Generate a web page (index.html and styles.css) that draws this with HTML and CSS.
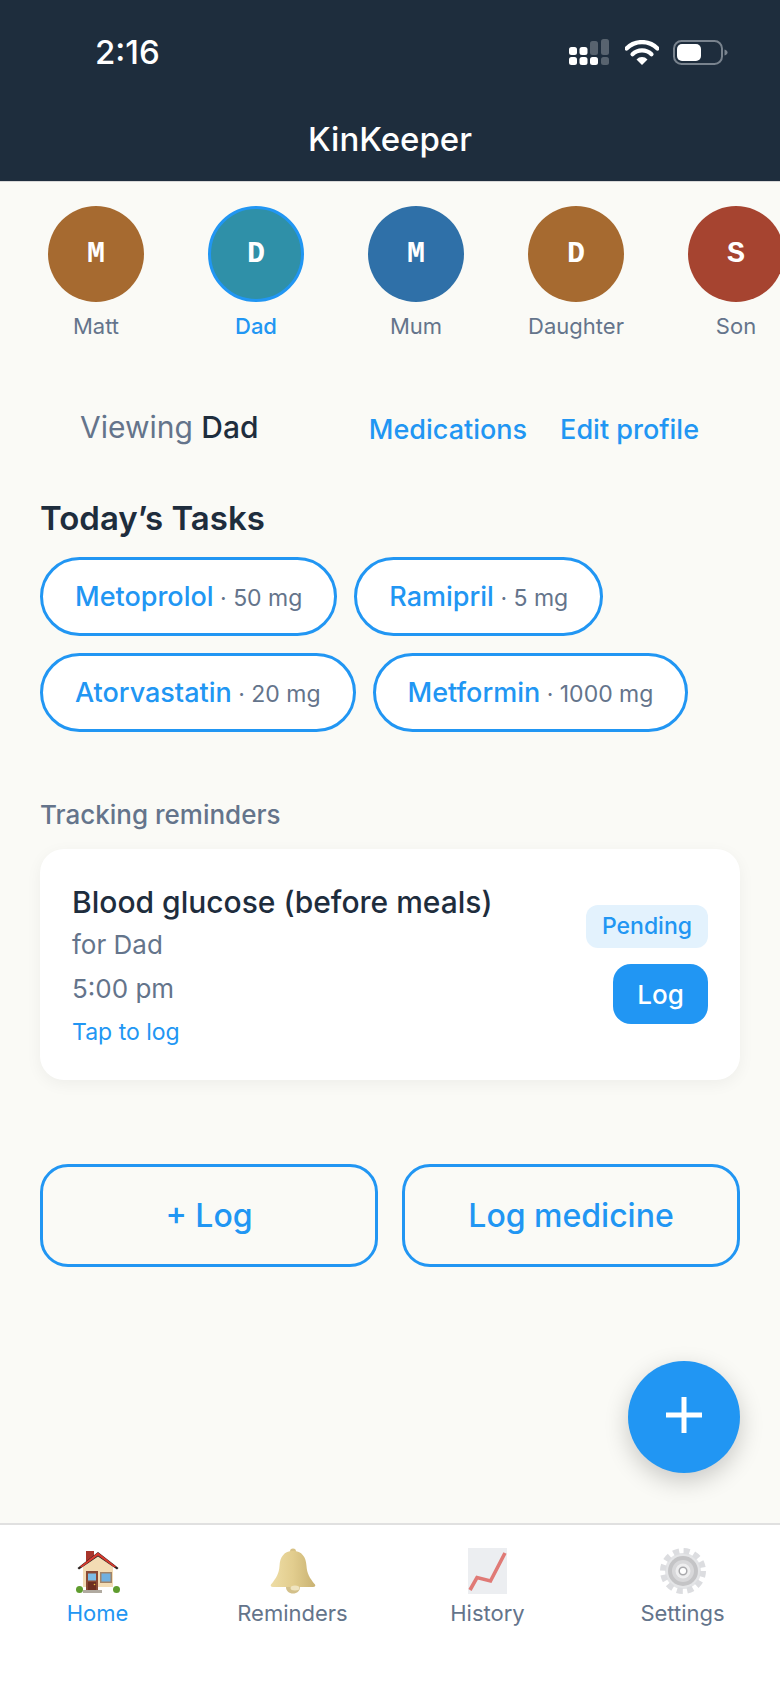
FILE: index.html
```html
<!DOCTYPE html>
<html lang="en">
<head>
    <meta charset="UTF-8">
    <meta name="viewport" content="width=device-width, initial-scale=1.0">
    <title>KinKeeper</title>
    <link rel="stylesheet" href="styles.css">
</head>
<body>

<div class="app">
    <!-- Header with status bar -->
    <header class="app-header">
        <div class="status-bar">
            <span class="status-time">2:16</span>
            <div class="status-icons">
                <svg class="icon-signal" width="42" height="26" viewBox="0 0 42 26">
                    <rect x="0" y="8" width="8" height="8" rx="2.5" fill="#fff"/>
                    <rect x="10.5" y="8" width="8" height="8" rx="2.5" fill="#fff"/>
                    <rect x="21" y="2" width="8" height="14" rx="2.5" fill="#58636f"/>
                    <rect x="32" y="0" width="8" height="16" rx="2.5" fill="#58636f"/>
                    <rect x="0" y="18" width="8" height="8" rx="2.5" fill="#fff"/>
                    <rect x="10.5" y="18" width="8" height="8" rx="2.5" fill="#fff"/>
                    <rect x="21" y="18" width="8" height="8" rx="2.5" fill="#fff"/>
                    <rect x="32" y="18" width="8" height="8" rx="2.5" fill="#58636f"/>
                </svg>
                <svg class="icon-wifi" width="34" height="25" viewBox="0 0 34 25">
                    <path d="M1.5 8.5a22 22 0 0 1 31 0" fill="none" stroke="#fff" stroke-width="4.4" stroke-linecap="round"/>
                    <path d="M7.5 14.3a13.5 13.5 0 0 1 19 0" fill="none" stroke="#fff" stroke-width="4.2" stroke-linecap="round"/>
                    <path d="M11.5 19.5a7.5 7.5 0 0 1 11 0L17 25z" fill="#fff"/>
                </svg>
                <svg class="icon-battery" width="55" height="25" viewBox="0 0 55 25">
                    <rect x="1" y="1" width="48" height="23" rx="7.5" fill="none" stroke="#79838e" stroke-width="2"/>
                    <rect x="4" y="4" width="24" height="17" rx="5" fill="#fff"/>
                    <path d="M51.500 9.500c2 .6 3 1.700 3 3s-1 2.400-3 3z" fill="#79838e"/>
                </svg>
            </div>
        </div>
        <h1 class="app-title">KinKeeper</h1>
    </header>

    <main class="app-main">
        <!-- Family members -->
        <div class="member-row">
            <div class="member">
                <div class="avatar avatar-amber">M</div>
                <span class="member-name">Matt</span>
            </div>
            <div class="member member-active">
                <div class="avatar avatar-teal">D</div>
                <span class="member-name">Dad</span>
            </div>
            <div class="member">
                <div class="avatar avatar-blue">M</div>
                <span class="member-name">Mum</span>
            </div>
            <div class="member">
                <div class="avatar avatar-amber">D</div>
                <span class="member-name">Daughter</span>
            </div>
            <div class="member">
                <div class="avatar avatar-red">S</div>
                <span class="member-name">Son</span>
            </div>
        </div>

        <div class="viewing-row">
            <div class="viewing-label">Viewing <strong>Dad</strong></div>
            <div class="viewing-links">
                <a class="text-link">Medications</a>
                <a class="text-link">Edit profile</a>
            </div>
        </div>

        <section class="content">
            <h2 class="section-title">Today’s Tasks</h2>
            <div class="chip-list">
                <button class="chip"><span class="chip-name">Metoprolol</span> · 50 mg</button>
                <button class="chip"><span class="chip-name">Ramipril</span> · 5 mg</button>
                <button class="chip"><span class="chip-name">Atorvastatin</span> · 20 mg</button>
                <button class="chip"><span class="chip-name">Metformin</span> · 1000 mg</button>
            </div>

            <h3 class="section-subtitle">Tracking reminders</h3>
            <div class="reminder-card">
                <div class="reminder-info">
                    <div class="reminder-title">Blood glucose (before meals)</div>
                    <div class="reminder-for">for Dad</div>
                    <div class="reminder-time">5:00 pm</div>
                    <div class="reminder-hint">Tap to log</div>
                </div>
                <div class="reminder-actions">
                    <span class="badge-pending">Pending</span>
                    <button class="log-button">Log</button>
                </div>
            </div>

            <div class="action-row">
                <button class="action-button">+ Log</button>
                <button class="action-button">Log medicine</button>
            </div>
        </section>

        <button class="fab" aria-label="Add">
            <svg width="36" height="36" viewBox="0 0 36 36"><path d="M15.500 0h5v15.500H36v5H20.500V36h-5V20.500H0v-5h15.500z" fill="#fff"/></svg>
        </button>
    </main>

    <!-- Bottom tabs -->
    <nav class="tab-bar">
        <div class="tab tab-active">
            <svg class="tab-icon" width="44" height="44" viewBox="0 0 44 44">
                <rect x="10" y="2" width="8" height="12" fill="#a8352b"/>
                <path d="M22 6 37 18v20H7V18z" fill="#f3dcb4"/>
                <path d="M1.500 19 22 3l20.500 16-1.500 1.500L22 7.500 3 20.500z" fill="#2b2320"/>
                <path d="M4 17.500 22 3.500l18 14-1.500 1L22 6.500 5.500 18.500z" fill="#d83a2e"/>
                <rect x="10" y="22" width="12" height="20" fill="#8a4a35"/>
                <rect x="12" y="24.500" width="8" height="7" fill="#7cbce6"/>
                <rect x="12" y="33" width="8" height="8" fill="#6e2f22"/>
                <circle cx="18.500" cy="35.500" r=".8" fill="#f0c040"/>
                <rect x="24" y="23" width="12" height="11" fill="#a28468"/>
                <rect x="25.500" y="24.500" width="9" height="8" fill="#70b0e0"/>
                <rect x="7" y="41" width="19" height="3" fill="#b0aaa0"/>
                <circle cx="3.500" cy="40.500" r="3.500" fill="#5f9c2e"/>
                <circle cx="40.500" cy="40.500" r="3.500" fill="#5f9c2e"/>
            </svg>
            <span class="tab-label">Home</span>
        </div>
        <div class="tab">
            <svg class="tab-icon" width="46" height="46" viewBox="0 0 46 46">
                <defs>
                    <linearGradient id="bellFill" x1="0" y1="0" x2="1" y2="0">
                        <stop offset="0" stop-color="#eedda6"/>
                        <stop offset=".5" stop-color="#e2cd8e"/>
                        <stop offset="1" stop-color="#c9b272"/>
                    </linearGradient>
                </defs>
                <circle cx="23" cy="3.500" r="3" fill="#d8c286"/>
                <path d="M23 3c9 0 13 6 13.500 15 .4 7 3 12 8.500 18.500.8 1.300 0 2.500-2 2.500H3c-2 0-2.800-1.200-2-2.500C6.500 30 9.100 25 9.500 18 10 9 14 3 23 3z" fill="url(#bellFill)"/>
                <path d="M16 39c0 4 3 6.500 7 6.500s7-2.500 7-6.500z" fill="#d3c08a"/>
                <ellipse cx="25" cy="40" rx="4.500" ry="2.500" fill="#efe4c0"/>
            </svg>
            <span class="tab-label">Reminders</span>
        </div>
        <div class="tab">
            <svg class="tab-icon" width="39" height="46" viewBox="0 0 39 46">
                <rect width="39" height="46" fill="#eceef1"/>
                <path d="M2 42 9 29.500 22.500 33 37 5" fill="none" stroke="#e07a76" stroke-width="3.600"/>
            </svg>
            <span class="tab-label">History</span>
        </div>
        <div class="tab">
            <svg class="tab-icon" width="46" height="46" viewBox="0 0 46 46">
                <circle cx="23" cy="23" r="18" fill="#e4e5e7"/>
                <circle cx="23" cy="23" r="20" fill="none" stroke="#dcdde0" stroke-width="6" stroke-dasharray="6 4.470"/>
                <circle cx="23" cy="23" r="15" fill="#c4c4c6"/>
                <circle cx="23" cy="23" r="11" fill="#d8d8da"/>
                <circle cx="23" cy="23" r="7.500" fill="#eeeeef"/>
                <circle cx="23" cy="23" r="3.800" fill="#fff" stroke="#a9a9ac" stroke-width="1.500"/>
            </svg>
            <span class="tab-label">Settings</span>
        </div>
    </nav>
</div>

</body>
</html>
```

FILE: styles.css
```css
* {
    box-sizing: border-box;
}

body {
    margin: 0;
    font-family: Inter, "Noto Sans", sans-serif;
    color: #1e2d3d;
    background-color: #fafaf6;
}

button {
    font-family: inherit;
    cursor: pointer;
}

.app {
    display: flex;
    flex-direction: column;
    width: 780px;
    height: 1688px;
    overflow: hidden;
}

/* Header */
.app-header {
    height: 182px;
    background-color: #1e2d3d;
    color: #fff;
    border-bottom: 1px solid #d8d8d8;
}

.status-bar {
    display: flex;
    justify-content: space-between;
    align-items: center;
    height: 104px;
    padding: 0 52px 0 95px;
}

.status-time {
    font-size: 33px;
    font-weight: 500;
}

.status-icons {
    display: flex;
    align-items: center;
    gap: 14px;
}

.app-title {
    margin: 0;
    text-align: center;
    font-size: 33px;
    line-height: 70px;
    font-weight: 500;
}

/* Main */
.app-main {
    position: relative;
    flex: 1;
}

.member-row {
    display: flex;
    padding: 24px 0 0 16px;
    overflow: hidden;
}

.member {
    display: flex;
    flex-direction: column;
    align-items: center;
    flex: 0 0 160px;
}

.avatar {
    display: flex;
    justify-content: center;
    align-items: center;
    width: 96px;
    height: 96px;
    border-radius: 50%;
    color: #fff;
    font-family: "Liberation Mono", monospace;
    font-size: 30px;
    font-weight: bold;
}

.avatar-amber { background-color: #a66a30; }
.avatar-teal { background-color: #2f90a8; }
.avatar-blue { background-color: #2f70a8; }
.avatar-red { background-color: #a64430; }

.member-name {
    margin-top: 9px;
    font-size: 22px;
    line-height: 30px;
    color: #64748b;
}

.member-active .avatar {
    border: 3px solid #2196f3;
}

.member-active .member-name {
    color: #2196f3;
    font-weight: 500;
}

.viewing-row {
    display: flex;
    justify-content: space-between;
    align-items: flex-start;
    margin-top: 66px;
    padding: 0 81px 0 80px;
}

.viewing-label {
    font-size: 30px;
    line-height: 40px;
    color: #64748b;
}

.viewing-label strong {
    font-weight: 500;
    color: #1e2d3d;
}

.viewing-links {
    display: flex;
    gap: 33px;
    margin-top: 3px;
}

.text-link {
    font-size: 27px;
    line-height: 40px;
    font-weight: 500;
    color: #2196f3;
}

.content {
    padding: 0 40px;
}

.section-title {
    margin: 46px 0 17px;
    font-size: 33px;
    line-height: 44px;
    font-weight: 600;
}

.chip-list {
    display: flex;
    flex-wrap: wrap;
    gap: 17px;
}

.chip {
    height: 79px;
    padding: 0 32px;
    border: 3px solid #2196f3;
    border-radius: 40px;
    background-color: #fff;
    color: #64748b;
    font-size: 23px;
}

.chip-name {
    font-size: 27px;
    font-weight: 500;
    color: #2196f3;
}

.section-subtitle {
    margin: 65px 0 16px;
    font-size: 26px;
    line-height: 36px;
    font-weight: 500;
    color: #64748b;
}

.reminder-card {
    display: flex;
    justify-content: space-between;
    align-items: center;
    height: 231px;
    padding: 0 32px;
    border-radius: 24px;
    background-color: #fff;
    box-shadow: 0 4px 16px rgba(0, 0, 0, 0.05);
}

.reminder-title {
    font-size: 30px;
    line-height: 40px;
    font-weight: 500;
}

.reminder-for,
.reminder-time {
    font-size: 26px;
    line-height: 36px;
    color: #64748b;
}

.reminder-for {
    margin-top: 5px;
}

.reminder-time {
    margin-top: 8px;
}

.reminder-hint {
    margin-top: 9px;
    font-size: 23px;
    line-height: 32px;
    color: #2196f3;
}

.reminder-actions {
    display: flex;
    flex-direction: column;
    align-items: flex-end;
    gap: 16px;
}

.badge-pending {
    padding: 0 16px;
    border-radius: 12px;
    background-color: #e3f2fd;
    color: #2196f3;
    font-size: 23px;
    line-height: 43px;
    font-weight: 500;
}

.log-button {
    width: 95px;
    height: 60px;
    border: none;
    border-radius: 18px;
    background-color: #2196f3;
    color: #fff;
    font-size: 26px;
    font-weight: 500;
}

.action-row {
    display: grid;
    grid-template-columns: 1fr 1fr;
    gap: 24px;
    margin-top: 84px;
}

.action-button {
    height: 103px;
    border: 3px solid #2196f3;
    border-radius: 28px;
    background: none;
    color: #2196f3;
    font-size: 32px;
    font-weight: 500;
}

.fab {
    position: absolute;
    right: 40px;
    bottom: 50px;
    display: flex;
    justify-content: center;
    align-items: center;
    width: 112px;
    height: 112px;
    padding: 0 0 4px;
    border: none;
    border-radius: 50%;
    background-color: #2196f3;
    box-shadow: 0 8px 24px rgba(0, 0, 0, 0.2);
}

/* Bottom tabs */
.tab-bar {
    display: grid;
    grid-template-columns: repeat(4, 1fr);
    height: 165px;
    padding-top: 23px;
    border-top: 2px solid #e0e0e0;
    background-color: #fff;
}

.tab {
    display: flex;
    flex-direction: column;
    align-items: center;
}

.tab-icon {
    height: 46px;
}

.tab-label {
    margin-top: 4px;
    font-size: 22px;
    line-height: 30px;
    color: #64748b;
}

.tab-active .tab-label {
    color: #2196f3;
}
```
